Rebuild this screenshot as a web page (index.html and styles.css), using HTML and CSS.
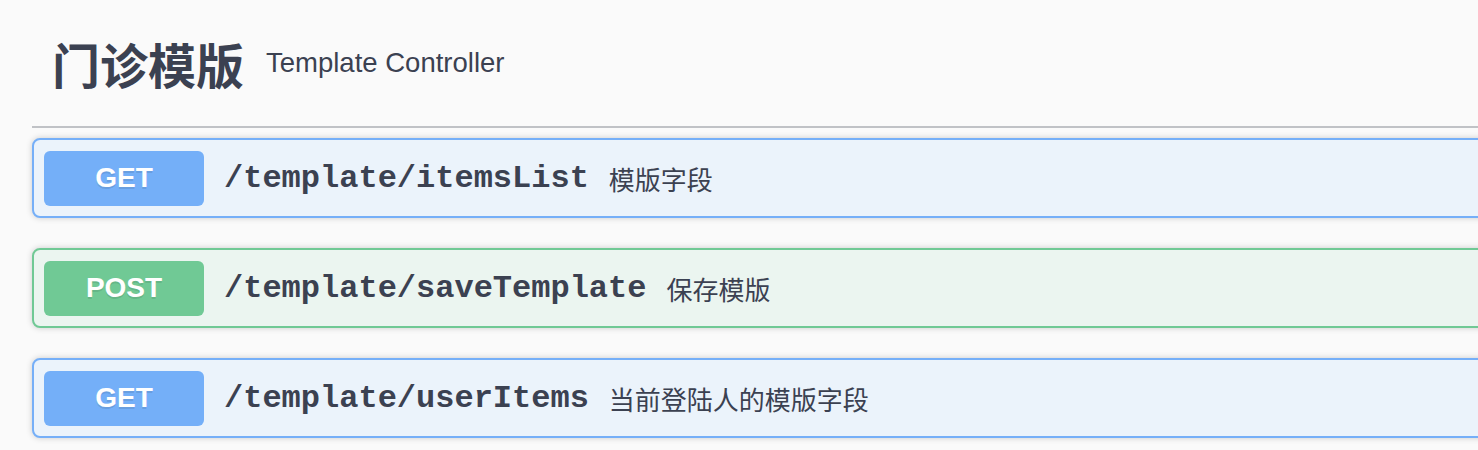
FILE: index.html
```html
<!DOCTYPE html>
<html lang="zh">
<head>
<meta charset="utf-8">
<title>门诊模版</title>
<link rel="stylesheet" href="styles.css">
</head>
<body>
<div class="section">
  <h4 class="tag">
    <span class="tag-name">门诊模版</span>
    <small class="tag-desc">Template Controller</small>
  </h4>
  <div class="opblock opblock-get">
    <span class="method">GET</span>
    <span class="path">/template/itemsList</span>
    <span class="desc">模版字段</span>
  </div>
  <div class="opblock opblock-post">
    <span class="method">POST</span>
    <span class="path">/template/saveTemplate</span>
    <span class="desc">保存模版</span>
  </div>
  <div class="opblock opblock-get">
    <span class="method">GET</span>
    <span class="path">/template/userItems</span>
    <span class="desc">当前登陆人的模版字段</span>
  </div>
</div>
</body>
</html>
```

FILE: styles.css
```css
html, body {
  margin: 0;
  padding: 0;
  background: #fafafa;
  overflow: hidden;
}

body {
  font-family: "Liberation Sans", "Noto Sans CJK SC", sans-serif;
  color: #3b4151;
}

.section {
  padding-left: 32px;
  margin-right: -30px;
}

.tag {
  display: flex;
  align-items: center;
  box-sizing: border-box;
  height: 128px;
  margin: 0 0 10px;
  padding: 0 40px 0 20px;
  border-bottom: 2px solid rgba(59, 65, 81, 0.3);
  font-weight: bold;
}

.tag-name {
  font-family: "Noto Sans CJK SC", sans-serif;
  font-size: 48px;
  line-height: 1;
  font-weight: 700;
  color: #3b4151;
}

.tag-desc {
  font-family: "Liberation Sans", sans-serif;
  font-size: 27.5px;
  font-weight: normal;
  margin-left: 22px;
  color: #3b4151;
}

.opblock {
  display: flex;
  align-items: center;
  box-sizing: border-box;
  height: 80px;
  padding: 10px;
  margin-bottom: 30px;
  border: 2px solid;
  border-radius: 8px;
  box-shadow: 0 0 6px rgba(0, 0, 0, 0.19);
}

.opblock-get {
  background: #ebf3fb;
  border-color: #75aff8;
}

.opblock-post {
  background: #ebf5f0;
  border-color: #70c995;
}

.method {
  display: flex;
  align-items: center;
  justify-content: center;
  width: 160px;
  height: 55px;
  flex: none;
  border-radius: 6px;
  font-family: "Liberation Sans", sans-serif;
  font-size: 28px;
  font-weight: bold;
  color: #fff;
  text-shadow: 0 2px 0 rgba(0, 0, 0, 0.1);
}

.opblock-get .method {
  background: #74aff8;
}

.opblock-post .method {
  background: #70c995;
}

.path {
  padding: 0 20px;
  font-family: "Liberation Mono", monospace;
  font-size: 32px;
  font-weight: bold;
  color: #3b4151;
}

.desc {
  font-family: "Noto Sans CJK SC", sans-serif;
  font-size: 26px;
  color: #3b4151;
}
```
